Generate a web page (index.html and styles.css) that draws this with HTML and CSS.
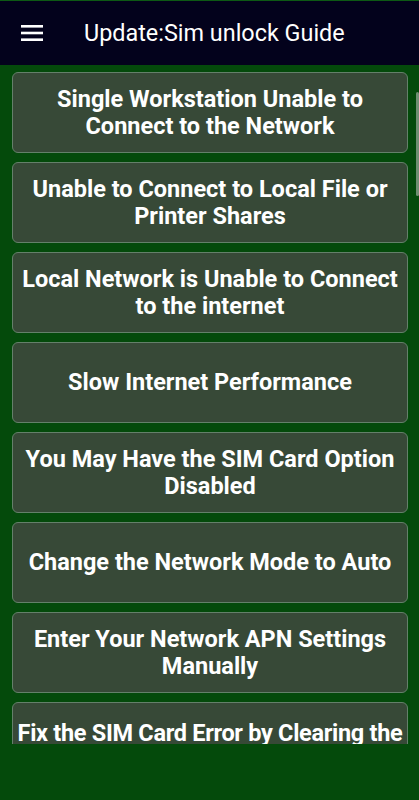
FILE: index.html
```html
<!DOCTYPE html>
<html lang="en">
<head>
<meta charset="UTF-8">
<meta name="viewport" content="width=device-width, initial-scale=1.0">
<title>Update:Sim unlock Guide</title>
<link rel="stylesheet" href="styles.css">
</head>
<body>

<header class="toolbar">
<button class="menu-btn" type="button" aria-label="Menu">
<svg width="22" height="16" viewBox="0 0 22 16">
<rect x="0" y="0" width="22" height="2.6" fill="#fff"/>
<rect x="0" y="6.7" width="22" height="2.6" fill="#fff"/>
<rect x="0" y="13.4" width="22" height="2.6" fill="#fff"/>
</svg>
</button>
<h1 class="title">Update:Sim unlock Guide</h1>
</header>

<main class="list">
<div class="scrollbar"></div>
<div class="item">Single Workstation Unable to Connect to the Network</div>
<div class="item">Unable to Connect to Local File or Printer Shares</div>
<div class="item">Local Network is Unable to Connect to the internet</div>
<div class="item">Slow Internet Performance</div>
<div class="item">You May Have the SIM Card Option Disabled</div>
<div class="item">Change the Network Mode to Auto</div>
<div class="item">Enter Your Network APN Settings Manually</div>
<div class="item">Fix the SIM Card Error by Clearing the Cache</div>
</main>

</body>
</html>
```

FILE: styles.css
```css
body {
margin: 0;
background-color: #044a0b;
font-family: Roboto, "Liberation Sans", sans-serif;
color: #fff;
}
.toolbar {
display: flex;
align-items: center;
height: 65px;
box-sizing: border-box;
border-top: 1px solid #0d5a14;
background-color: #03021c;
}
.menu-btn {
display: flex;
align-items: center;
background: none;
border: none;
padding: 0;
margin-left: 21px;
margin-right: 41px;
}
.title {
margin: 0;
font-size: 23.4px;
font-weight: 400;
}
.list {
position: relative;
height: 679px;
overflow: hidden;
padding: 7px 11px 0 12px;
box-sizing: border-box;
}
.item {
display: flex;
align-items: center;
justify-content: center;
height: 81px;
box-sizing: border-box;
margin-bottom: 9px;
padding: 0 2px;
background-color: #374937;
border: 1px solid #64806a;
border-radius: 6px;
font-size: 23.5px;
font-weight: 700;
line-height: 27px;
text-align: center;
}
/* last card is cut by the bottom of the list */
.item:last-child {
align-items: flex-start;
padding: 17px 0 0;
letter-spacing: -0.3px;
}
.scrollbar {
position: absolute;
right: 0;
top: 27px;
width: 3px;
height: 104px;
border-radius: 2px;
background-color: #6f8f72;
}
```
